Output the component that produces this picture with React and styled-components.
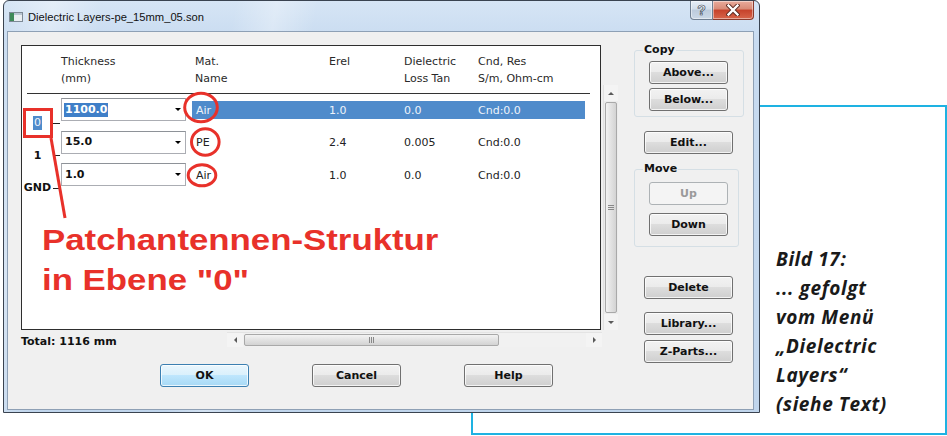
import React from 'react';
import styled, { createGlobalStyle } from 'styled-components';

const GlobalStyle = createGlobalStyle`
  html, body { margin: 0; padding: 0; background: #fff; }
  body { width: 947px; height: 436px; overflow: hidden; }
  *, *::before, *::after { box-sizing: border-box; }
`;

const UI = '"DejaVu Sans", Tahoma, Verdana, sans-serif';
const RED = '#e8312a';

const Page = styled.div`
  position: relative;
  width: 947px;
  height: 436px;
  display: flex;
  align-items: flex-start;
  background: #fff;
`;

/* cyan callout frame sitting behind the dialog */
const CalloutFrame = styled.div`
  position: absolute;
  left: 471px;
  top: 105px;
  width: 476px;
  height: 330px;
  border: 2px solid #1eb2e2;
  z-index: 0;
`;

const Window = styled.div`
  position: relative;
  z-index: 1;
  margin-left: 3px;
  width: 757px;
  height: 413px;
  border: 1px solid #3a4350;
  border-radius: 6px 6px 0 0;
  display: flex;
  flex-direction: column;
  background:
    linear-gradient(100deg,
      rgba(255,255,255,0) 0%, rgba(255,255,255,0.35) 6%, rgba(255,255,255,0) 12%,
      rgba(255,255,255,0) 28%, rgba(255,255,255,0.3) 33%, rgba(255,255,255,0) 38%,
      rgba(255,255,255,0) 100%),
    linear-gradient(#d6e5f5, #c8dbf0 40px, #c0d5ec);
`;

const TitleBar = styled.div`
  height: 30px;
  display: flex;
  align-items: flex-start;
  padding-left: 5px;
`;

const TitleIcon = styled.svg`
  margin-top: 11px;
  flex: none;
`;

const TitleText = styled.span`
  margin-left: 5px;
  margin-top: 9px;
  font-family: "Liberation Sans", Arial, sans-serif;
  font-size: 11.2px;
  line-height: 14px;
  color: #111;
`;

const CaptionButtons = styled.div`
  margin-left: auto;
  margin-right: 5px;
  display: flex;
`;

const CaptionButton = styled.div`
  height: 19px;
  width: ${p => p.$w}px;
  display: flex;
  align-items: center;
  justify-content: center;
  border: 1px solid ${p => (p.$close ? '#8a3a2c' : '#6f7f92')};
  border-top: none;
  border-left: ${p => (p.$close ? 'none' : undefined)};
  border-radius: ${p => (p.$close ? '0 0 4px 0' : '0 0 0 4px')};
  background: ${p =>
    p.$close
      ? 'linear-gradient(#e9ab9c, #d88a76 45%, #c6422b 50%, #d7654a)'
      : 'linear-gradient(#e6eef7, #d2deeb 45%, #bccbdc 50%, #cbd8e6)'};
  box-shadow: inset 0 0 0 1px rgba(255,255,255,0.45);
`;

const HelpGlyph = styled.span`
  font-family: "Liberation Sans", Arial, sans-serif;
  font-weight: bold;
  font-size: 14px;
  line-height: 14px;
  color: #fff;
  -webkit-text-stroke: 0.7px #3d4a5a;
`;

const Client = styled.div`
  flex: 1;
  margin: 0 5px 2px 3px;
  background: #f0f0f0;
  border: 1px solid #8ea0b5;
  display: flex;
`;

const MainCol = styled.div`
  padding: 13px 0 0 13px;
  display: flex;
  flex-direction: column;
`;

const ListRow = styled.div`
  display: flex;
  align-items: flex-start;
`;

const ListBox = styled.div`
  width: 580px;
  height: 285px;
  border: 1px solid #2e2e2e;
  background: #fff;
  font-family: ${UI};
  font-size: 11px;
  color: #222;
`;

const Header = styled.div`
  height: 48px;
  margin: 0 10px 0 5px;
  padding: 7px 0 0 34px;
  border-bottom: 1px solid #333;
  display: flex;
`;

const HeaderCell = styled.div`
  width: ${p => (p.$w ? `${p.$w}px` : 'auto')};
  flex: ${p => (p.$w ? 'none' : '1')};
  line-height: 17px;
  color: #2a2a2a;
`;

const Body = styled.div`
  display: flex;
  padding-top: 4px;
`;

const LevelColumn = styled.div`
  width: 39px;
  padding-top: 9px;
  display: flex;
  flex-direction: column;
`;

const LevelMark = styled.div`
  height: 32.5px;
  display: flex;
  align-items: center;
`;

const LevelLabel = styled.div`
  width: 31px;
  text-align: center;
  font-weight: bold;
  color: #111;
`;

const LevelText = styled.span`
  display: inline-block;
  line-height: 14px;
  padding: 0 1px;
  background: ${p => (p.$selected ? '#4f8bcb' : 'transparent')};
  color: ${p => (p.$selected ? '#f2f6fb' : '#111')};
  font-weight: ${p => (p.$selected ? 'normal' : 'bold')};
`;

const Tick = styled.div`
  width: 7px;
  height: 1px;
  background: #222;
`;

const RowsColumn = styled.div`
  display: flex;
  flex-direction: column;
`;

const DataRow = styled.div`
  height: 32.5px;
  display: flex;
  align-items: flex-start;
`;

const Combo = styled.div`
  width: 125px;
  height: 23px;
  border: 1px solid #abadb3;
  border-top-color: #8e9298;
  background: #fff;
  display: flex;
  align-items: center;
  padding-left: 2px;
`;

const ComboValue = styled.span`
  font-weight: bold;
  line-height: 14px;
  padding: 0 1px;
  color: ${p => (p.$selected ? '#fff' : '#111')};
  background: ${p => (p.$selected ? '#3f7fc8' : 'transparent')};
`;

const ComboArrow = styled.span`
  margin-left: auto;
  margin-right: 4px;
  width: 0;
  height: 0;
  border-left: 3px solid transparent;
  border-right: 3px solid transparent;
  border-top: 3px solid #000;
`;

const Cells = styled.div`
  margin: 3px 0 0 6px;
  width: 393px;
  height: 18px;
  padding-left: 4px;
  display: grid;
  grid-template-columns: 133px 75px 74px 1fr;
  align-items: center;
  background: ${p => (p.$selected ? '#4f8bcb' : 'transparent')};
  color: ${p => (p.$selected ? '#eef3fa' : '#222')};
`;

/* Win7-style scroll bars */
const VScroll = styled.div`
  margin: 40px 0 0 2px;
  width: 15px;
  height: 245px;
  display: flex;
  flex-direction: column;
  background: #ececec;
  border-left: 1px solid #e2e2e2;
`;

const HScroll = styled.div`
  width: 375px;
  height: 15px;
  display: flex;
  background: #f1f1f1;
  border-top: 1px solid #e4e4e4;
`;

const ScrollArrow = styled.div`
  flex: none;
  width: ${p => (p.$h ? '16px' : '100%')};
  height: ${p => (p.$h ? '100%' : '16px')};
  margin-left: ${p => (p.$end ? 'auto' : '0')};
  display: flex;
  align-items: center;
  justify-content: center;
  background: #f4f4f4;
`;

const Tri = styled.span`
  width: 0;
  height: 0;
  ${p => {
    const c = '#5a5a5a';
    if (p.$dir === 'up') return `border-left:3px solid transparent;border-right:3px solid transparent;border-bottom:3px solid ${c};`;
    if (p.$dir === 'down') return `border-left:3px solid transparent;border-right:3px solid transparent;border-top:3px solid ${c};`;
    if (p.$dir === 'left') return `border-top:3px solid transparent;border-bottom:3px solid transparent;border-right:3px solid ${c};`;
    return `border-top:3px solid transparent;border-bottom:3px solid transparent;border-left:3px solid ${c};`;
  }}
`;

const Thumb = styled.div`
  margin: 1px;
  border: 1px solid #a9a9a9;
  border-radius: 2px;
  display: flex;
  align-items: center;
  justify-content: center;
  ${p =>
    p.$h
      ? `width: 255px; background: linear-gradient(#f3f3f3, #e2e2e2 50%, #d3d3d3);`
      : `flex: 1; background: linear-gradient(to right, #f3f3f3, #e2e2e2 50%, #d3d3d3);`}
`;

const Grip = styled.span`
  ${p =>
    p.$h
      ? `width: 5px; height: 6px; border-left: 1px solid #888; border-right: 1px solid #888; background: linear-gradient(to right, transparent 1px, #888 1px, #888 2px, transparent 2px);`
      : `width: 6px; height: 5px; border-top: 1px solid #888; border-bottom: 1px solid #888; background: linear-gradient(transparent 1px, #888 1px, #888 2px, transparent 2px);`}
`;

const StatusRow = styled.div`
  margin-top: 2px;
  height: 15px;
  display: flex;
  align-items: center;
`;

const TotalText = styled.div`
  width: 206px;
  font-family: ${UI};
  font-size: 11px;
  font-weight: bold;
  color: #111;
  padding-top: 3px;
`;

const ButtonRow = styled.div`
  margin-top: 17px;
  padding-left: 139px;
  display: flex;
  gap: 63px;
`;

const PushButton = styled.div`
  flex: none;
  width: ${p => p.$w || 89}px;
  height: 23px;
  margin-left: ${p => p.$ml || 0}px;
  margin-top: ${p => p.$mt || 0}px;
  display: flex;
  align-items: center;
  justify-content: center;
  border-radius: 3px;
  font-family: ${UI};
  font-size: 11px;
  font-weight: bold;
  box-shadow: inset 0 0 0 1px rgba(255,255,255,0.75);
  ${p =>
    p.$disabled
      ? `border: 1px solid #adb2b5; background: #f4f4f4; color: #9a9a9a; box-shadow: none;`
      : p.$default
      ? `border: 1px solid #3c7fb1; background: linear-gradient(#eaf6fd, #d9f0fc 49%, #bee6fd 50%, #a7d9f5); color: #111;`
      : `border: 1px solid #707070; background: linear-gradient(#f2f2f2, #ebebeb 49%, #dddddd 50%, #cfcfcf); color: #111;`}
`;

const SideCol = styled.div`
  margin-left: 16px;
  padding-top: 18px;
  width: 110px;
  display: flex;
  flex-direction: column;
  align-items: flex-start;
`;

const GroupBox = styled.div`
  position: relative;
  flex: none;
  width: ${p => p.$w}px;
  height: ${p => p.$h}px;
  margin-top: ${p => p.$mt || 0}px;
  padding: ${p => p.$pt}px 0 0 14px;
  border: 1px solid #d5dfe5;
  border-radius: 3px;
  display: flex;
  flex-direction: column;
  gap: ${p => p.$gap}px;
`;

const GroupLegend = styled.span`
  position: absolute;
  left: 8px;
  top: -8px;
  padding: 0 1px;
  background: #f0f0f0;
  font-family: ${UI};
  font-size: 11px;
  font-weight: bold;
  line-height: 14px;
  color: #111;
`;

const Caption = styled.div`
  position: relative;
  z-index: 1;
  padding: 245px 0 0 16px;
  font-family: "Open Sans", "Noto Sans", sans-serif;
  font-style: italic;
  font-weight: bold;
  font-size: 19px;
  line-height: 29px;
  letter-spacing: 0.6px;
  color: #1a1a1a;
`;

/* red hand annotations drawn over the dialog */
const Markup = styled.svg`
  position: absolute;
  left: 0;
  top: 0;
  z-index: 2;
  pointer-events: none;
`;

const MarkupNote = styled.div`
  position: absolute;
  left: 42px;
  top: 220px;
  z-index: 2;
  font-family: "Liberation Sans", Arial, sans-serif;
  font-weight: bold;
  font-size: 30px;
  line-height: 40px;
  color: ${RED};
  white-space: nowrap;
  transform: scaleX(1.16);
  transform-origin: left top;
  pointer-events: none;
`;

const layers = [
  { thick: '1100.0', mat: 'Air', erel: '1.0', tan: '0.0', cnd: 'Cnd:0.0', selected: true },
  { thick: '15.0', mat: 'PE', erel: '2.4', tan: '0.005', cnd: 'Cnd:0.0' },
  { thick: '1.0', mat: 'Air', erel: '1.0', tan: '0.0', cnd: 'Cnd:0.0' },
];

const levels = [
  { name: '0', selected: true },
  { name: '1' },
  { name: 'GND' },
];

function ScrollBarV() {
  return (
    <VScroll>
      <ScrollArrow><Tri $dir="up" /></ScrollArrow>
      <Thumb><Grip /></Thumb>
      <ScrollArrow><Tri $dir="down" /></ScrollArrow>
    </VScroll>
  );
}

function ScrollBarH() {
  return (
    <HScroll>
      <ScrollArrow $h><Tri $dir="left" /></ScrollArrow>
      <Thumb $h><Grip $h /></Thumb>
      <ScrollArrow $h $end><Tri $dir="right" /></ScrollArrow>
    </HScroll>
  );
}

export default function App() {
  return (
    <>
      <GlobalStyle />
      <Page>
        <CalloutFrame />
        <Window>
          <TitleBar>
            <TitleIcon width="14" height="10" viewBox="0 0 14 10">
              <rect x="0.5" y="0.5" width="13" height="9" fill="#e9eef2" stroke="#7d8a96" />
              <rect x="1" y="1" width="4" height="8" fill="#3f8a5a" />
              <rect x="5" y="1" width="8" height="2" fill="#b9c7d4" />
            </TitleIcon>
            <TitleText>Dielectric Layers-pe_15mm_05.son</TitleText>
            <CaptionButtons>
              <CaptionButton $w={23}>
                <HelpGlyph>?</HelpGlyph>
              </CaptionButton>
              <CaptionButton $w={41} $close>
                <svg width="14" height="12" viewBox="0 0 14 12">
                  <path d="M2.5 1.5 L11.5 10.5 M11.5 1.5 L2.5 10.5" stroke="#5a2a22" strokeWidth="4.2" strokeLinecap="square" />
                  <path d="M2.5 1.5 L11.5 10.5 M11.5 1.5 L2.5 10.5" stroke="#fff" strokeWidth="2.4" strokeLinecap="square" />
                </svg>
              </CaptionButton>
            </CaptionButtons>
          </TitleBar>

          <Client>
            <MainCol>
              <ListRow>
                <ListBox>
                  <Header>
                    <HeaderCell $w={134}>Thickness<br />(mm)</HeaderCell>
                    <HeaderCell $w={134}>Mat.<br />Name</HeaderCell>
                    <HeaderCell $w={75}>Erel</HeaderCell>
                    <HeaderCell $w={74}>Dielectric<br />Loss Tan</HeaderCell>
                    <HeaderCell>Cnd, Res<br />S/m, Ohm-cm</HeaderCell>
                  </Header>
                  <Body>
                    <LevelColumn>
                      {levels.map(l => (
                        <LevelMark key={l.name}>
                          <LevelLabel>
                            <LevelText $selected={l.selected}>{l.name}</LevelText>
                          </LevelLabel>
                          <Tick />
                        </LevelMark>
                      ))}
                    </LevelColumn>
                    <RowsColumn>
                      {layers.map((r, i) => (
                        <DataRow key={i}>
                          <Combo>
                            <ComboValue $selected={r.selected}>{r.thick}</ComboValue>
                            <ComboArrow />
                          </Combo>
                          <Cells $selected={r.selected}>
                            <span>{r.mat}</span>
                            <span>{r.erel}</span>
                            <span>{r.tan}</span>
                            <span>{r.cnd}</span>
                          </Cells>
                        </DataRow>
                      ))}
                    </RowsColumn>
                  </Body>
                </ListBox>
                <ScrollBarV />
              </ListRow>

              <StatusRow>
                <TotalText>Total: 1116 mm</TotalText>
                <ScrollBarH />
              </StatusRow>

              <ButtonRow>
                <PushButton $default>OK</PushButton>
                <PushButton>Cancel</PushButton>
                <PushButton>Help</PushButton>
              </ButtonRow>
            </MainCol>

            <SideCol>
              <GroupBox $w={110} $h={67} $pt={10} $gap={4}>
                <GroupLegend>Copy</GroupLegend>
                <PushButton $w={79}>Above...</PushButton>
                <PushButton $w={79}>Below...</PushButton>
              </GroupBox>
              <PushButton $ml={10} $mt={14}>Edit...</PushButton>
              <GroupBox $w={105} $h={78} $mt={15} $pt={12} $gap={8}>
                <GroupLegend>Move</GroupLegend>
                <PushButton $w={79} $disabled>Up</PushButton>
                <PushButton $w={79}>Down</PushButton>
              </GroupBox>
              <PushButton $ml={10} $mt={29}>Delete</PushButton>
              <PushButton $ml={10} $mt={13}>Library...</PushButton>
              <PushButton $ml={10} $mt={5}>Z-Parts...</PushButton>
            </SideCol>
          </Client>
        </Window>

        <Caption>
          Bild 17:<br />
          ... gefolgt<br />
          vom Menü<br />
          „Dielectric<br />
          Layers“<br />
          (siehe Text)
        </Caption>

        <Markup width="947" height="436" viewBox="0 0 947 436">
          <g fill="none" stroke={RED} strokeWidth="3">
            <rect x="24.5" y="109.5" width="27" height="27" />
            <path d="M51 138 L65 218" />
            <ellipse cx="201" cy="107.5" rx="16.3" ry="14.3" />
            <ellipse cx="205.3" cy="142" rx="13.8" ry="13.2" />
            <ellipse cx="202" cy="175.3" rx="13.8" ry="10.5" />
          </g>
        </Markup>
        <MarkupNote>
          Patchantennen-Struktur<br />
          in Ebene "0"
        </MarkupNote>
      </Page>
    </>
  );
}
